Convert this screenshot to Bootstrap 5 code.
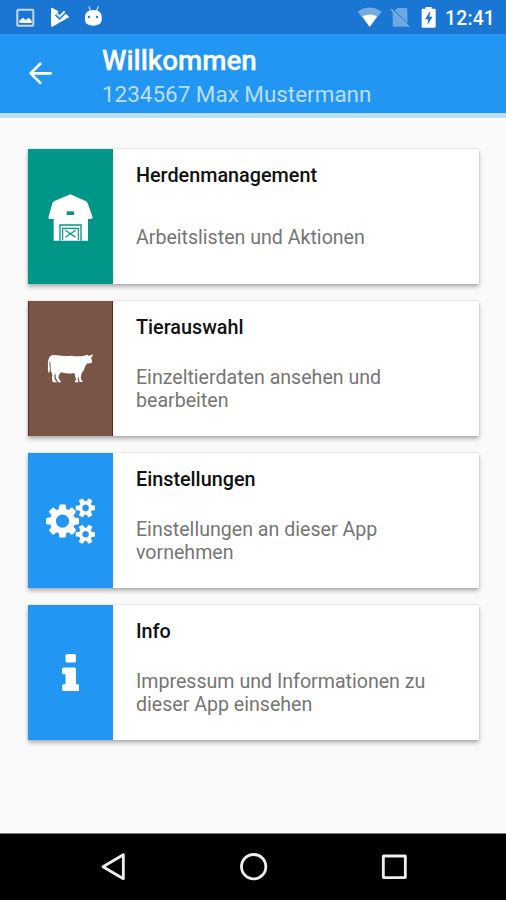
<!DOCTYPE html>
<html lang="de">
<head>
<meta charset="utf-8">
<meta name="viewport" content="width=device-width, initial-scale=1">
<title>Willkommen</title>
<link href="https://cdn.jsdelivr.net/npm/bootstrap@5.3.0/dist/css/bootstrap.min.css" rel="stylesheet">
<style>
  body { font-family: Roboto, "Liberation Sans", sans-serif; background: #fafafa; overflow: hidden; }
  svg { display: block; flex: none; }
  .status-bar { height: 34px; background: #1976d2; }
  .clock { font-size: 19.3px; font-weight: 500; line-height: 34px; padding-top: 2px; padding-right: 11px; letter-spacing: .2px; }
  .app-bar { height: 79px; background: #2196f3; }
  .app-title { font-size: 27.8px; font-weight: 500; line-height: 34px; padding-top: 10px; -webkit-text-stroke: .3px #fff; }
  .app-user { font-size: 22.45px; line-height: 32px; color: #bbdefb; }
  .app-edge { height: 5px; background: #bbdefb; }
  .menu { padding: 31.4px 27px 0 28.4px; gap: 17px; }
  .menu-card { height: 135px; border: 0; border-radius: 0; box-shadow: 0 3px 4px rgba(0,0,0,.27), 0 0 2px rgba(0,0,0,.16); }
  .tile { width: 84.6px; color: #fff; }
  .tile-teal { background: #009688; }
  .tile-brown { background: #795548; box-shadow: inset 1px 0 #6b2f20, inset -1px 0 #6b2018; }
  .tile-blue { background: #2196f3; }
  .entry { padding: 12.6px 20px 0 23px; }
  .entry-title { font-size: 19.8px; font-weight: 500; line-height: 27px; color: #111; }
  .entry-text { font-size: 19.6px; line-height: 23px; height: 97px; color: #757575; }
  .nav-keys { height: 67px; border-top: 1px solid #777; }
</style>
<script src="https://cdn.jsdelivr.net/npm/bootstrap@5.3.0/dist/js/bootstrap.bundle.min.js"></script>
</head>
<body class="vh-100 d-flex flex-column">
<div class="status-bar d-flex justify-content-between text-white">
  <svg width="110" height="34" viewBox="0 0 330 102" fill="#fff">
    <rect x="52" y="29" width="48" height="48" rx="3" fill="none" stroke="#c3dbf5" stroke-width="6"/>
    <path d="M58 69V62L69 53L77 60L86 53L95 62V69Z"/>
    <path d="M156 23L176 34L168 43L179 53L194 38L208 51L156 81Q153 80 153 76V28Q153 23 156 23Z"/>
    <path d="M166 45L179 57L199 37" fill="none" stroke="#1976d2" stroke-width="4"/>
    <path d="M170 40L179 49L194 34" fill="none" stroke="#fff" stroke-width="5"/>
    <path d="M267 19L271 33M295 19L290 33" stroke="#c3dbf5" stroke-width="4"/>
    <path d="M255 50Q256 30 281 30Q304 30 305 50V61Q302 77 280 77Q257 77 255 61Z"/>
    <circle cx="267" cy="51" r="3.5" fill="#1976d2"/><circle cx="291" cy="51" r="3.5" fill="#1976d2"/>
  </svg>
  <div class="d-flex">
    <svg width="90" height="34" viewBox="306 0 270 102" fill="#fff">
      <path d="M314 35Q350 10 386 35L350 81Z" opacity=".4"/>
      <path d="M328 49Q350 38 372 49L350 81Z"/>
      <path d="M426 31L434 24H460Q463 24 463 28V80H422Q419 80 419 76V39Z" opacity=".36"/>
      <path d="M416 26L470 81" stroke="#1976d2" stroke-width="5"/>
      <path d="M414 28L468 81" stroke="#84b4e7" stroke-width="4"/>
      <path d="M518 21H536V26H545Q548 26 548 30V80Q548 83 545 83H509Q506 83 506 80V30Q506 26 509 26H518Z"/>
      <path d="M530 35L516 58H526L523 75L539 50H529L532 35Z" fill="#1976d2"/>
    </svg>
    <div class="clock text-nowrap">12:41</div>
  </div>
</div>
<header class="app-bar d-flex text-white">
  <svg width="102" height="79" viewBox="0 102 306 237" fill="none" stroke="#fff" stroke-width="8">
    <path d="M155 220H93M123 189L92 220L123 251"/>
  </svg>
  <div>
    <div class="app-title">Willkommen</div>
    <div class="app-user">1234567 Max Mustermann</div>
  </div>
</header>
<div class="app-edge"></div>
<main class="menu d-flex flex-column flex-grow-1">
  <div class="card menu-card flex-row">
    <div class="tile tile-teal flex-shrink-0">
      <svg width="85" height="135" viewBox="25 27 255 405" fill="#fff">
        <path d="M152 163L196 182Q202 184 204 190L219 232Q218 237 214 237H205V302H102V237H91Q86 237 86 233L98 190Q100 184 106 182Z"/>
        <rect x="141" y="214" width="22" height="11" fill="#009688"/>
        <path d="M121 302V255H184V302" fill="none" stroke="#009688" stroke-width="4"/>
        <path d="M129 266V300M176 266V300M127 265H178M137 271L168 292M168 271L137 292" fill="none" stroke="#009688" stroke-width="3.5"/>
      </svg>
    </div>
    <div class="entry flex-grow-1">
      <div class="entry-title">Herdenmanagement</div>
      <div class="entry-text d-flex align-items-center"><span>Arbeitslisten und Aktionen</span></div>
    </div>
  </div>
  <div class="card menu-card flex-row">
    <div class="tile tile-brown flex-shrink-0">
      <svg width="85" height="135" viewBox="25 27 255 405" fill="#fff">
        <path d="M92 192Q98 188 112 190Q134 194 154 191Q176 194 194 191L202 188L206 191Q213 192 220 187Q221 193 214 197L218 209Q215 216 204 214Q198 219 196 225Q193 236 187 242Q182 250 184 262L190 270H180L176 252L174 264L177 271H165L169 262L164 243Q146 247 124 241Q117 248 116 257L125 271H115L108 256V245L104 250L105 262L112 271H101Q96 268 97 258L98 246Q92 240 93 222L91 205Q88 211 90 225Q92 240 87 243Q83 236 85 225Q83 203 92 192Z"/>
      </svg>
    </div>
    <div class="entry flex-grow-1">
      <div class="entry-title">Tierauswahl</div>
      <div class="entry-text d-flex align-items-center"><span>Einzeltierdaten ansehen und<br>bearbeiten</span></div>
    </div>
  </div>
  <div class="card menu-card flex-row">
    <div class="tile tile-blue flex-shrink-0 d-flex justify-content-center align-items-center">
      <svg width="49.5" height="46.2" viewBox="0 0 1920 1792" fill="#fff"><path d="M896 896q0-106-75-181t-181-75-181 75-75 181 75 181 181 75 181-75 75-181zm768 512q0-52-38-90t-90-38-90 38-38 90q0 53 37.500 90.500t90.500 37.500 90.500-37.500 37.500-90.500zm0-1024q0-52-38-90t-90-38-90 38-38 90q0 53 37.500 90.500t90.500 37.500 90.500-37.500 37.500-90.500zm-384 421v185q0 10-7 19.500t-16 10.500l-155 24q-11 35-32 76 34 48 90 115 7 11 7 20 0 12-7 19-23 30-82.500 89.500t-78.500 59.500q-11 0-21-7l-115-90q-37 19-77 31-11 108-23 155-7 24-30 24h-186q-11 0-20-7.500t-10-17.500l-23-153q-34-10-75-31l-118 89q-7 7-20 7-11 0-21-8-144-133-144-160 0-9 7-19 10-14 41-53t47-61q-23-44-35-82l-152-24q-10-1-17-9.500t-7-19.500v-185q0-10 7-19.500t16-10.500l155-24q11-35 32-76-34-48-90-115-7-11-7-20 0-12 7-20 22-30 82-89t79-59q11 0 21 7l115 90q34-18 77-32 11-108 23-154 7-24 30-24h186q11 0 20 7.500t10 17.500l23 153q34 10 75 31l118-89q8-7 20-7 11 0 21 8 144 133 144 160 0 8-7 19-12 16-42 54t-45 60q23 48 34 82l152 23q10 2 17 10.500t7 19.500zm640 533v140q0 16-149 31-12 27-30 52 51 113 51 138 0 4-4 7-122 71-124 71-8 0-46-47t-52-68q-20 2-30 2t-30-2q-14 21-52 68t-46 47q-2 0-124-71-4-3-4-7 0-25 51-138-18-25-30-52-149-15-149-31v-140q0-16 149-31 13-29 30-52-51-113-51-138 0-4 4-7 4-2 35-20t59-34 30-16q8 0 46 46.500t52 67.500q20-2 30-2t30 2q51-71 92-112l6-2q4 0 124 70 4 3 4 7 0 25-51 138 17 23 30 52 149 15 149 31zm0-1024v140q0 16-149 31-12 27-30 52 51 113 51 138 0 4-4 7-122 71-124 71-8 0-46-47t-52-68q-20 2-30 2t-30-2q-14 21-52 68t-46 47q-2 0-124-71-4-3-4-7 0-25 51-138-18-25-30-52-149-15-149-31v-140q0-16 149-31 13-29 30-52-51-113-51-138 0-4 4-7 4-2 35-20t59-34 30-16q8 0 46 46.500t52 67.500q20-2 30-2t30 2q51-71 92-112l6-2q4 0 124 70 4 3 4 7 0 25-51 138 17 23 30 52 149 15 149 31z"/></svg>
    </div>
    <div class="entry flex-grow-1">
      <div class="entry-title">Einstellungen</div>
      <div class="entry-text d-flex align-items-center"><span>Einstellungen an dieser App<br>vornehmen</span></div>
    </div>
  </div>
  <div class="card menu-card flex-row">
    <div class="tile tile-blue flex-shrink-0 d-flex justify-content-center align-items-center">
      <svg width="17.5" height="37" viewBox="576 128 640 1408" preserveAspectRatio="none" fill="#fff"><path d="M1216 1344v128q0 26-19 45t-45 19h-512q-26 0-45-19t-19-45v-128q0-26 19-45t45-19h64v-384h-64q-26 0-45-19t-19-45v-128q0-26 19-45t45-19h384q26 0 45 19t19 45v576h64q26 0 45 19t19 45zm-128-1152v192q0 26-19 45t-45 19h-256q-26 0-45-19t-19-45v-192q0-26 19-45t45-19h256q26 0 45 19t19 45z"/></svg>
    </div>
    <div class="entry flex-grow-1">
      <div class="entry-title">Info</div>
      <div class="entry-text d-flex align-items-center"><span>Impressum und Informationen zu<br>dieser App einsehen</span></div>
    </div>
  </div>
</main>
<footer class="nav-keys bg-black">
  <svg width="506" height="66" viewBox="-240 27 1518 198" fill="none" stroke="#eee" stroke-width="8.5" stroke-linejoin="round">
    <path d="M130 89V161L69 125Z"/><circle cx="521" cy="125" r="36.500"/><rect x="910" y="93" width="66" height="65" rx="1"/>
  </svg>
</footer>
</body>
</html>
